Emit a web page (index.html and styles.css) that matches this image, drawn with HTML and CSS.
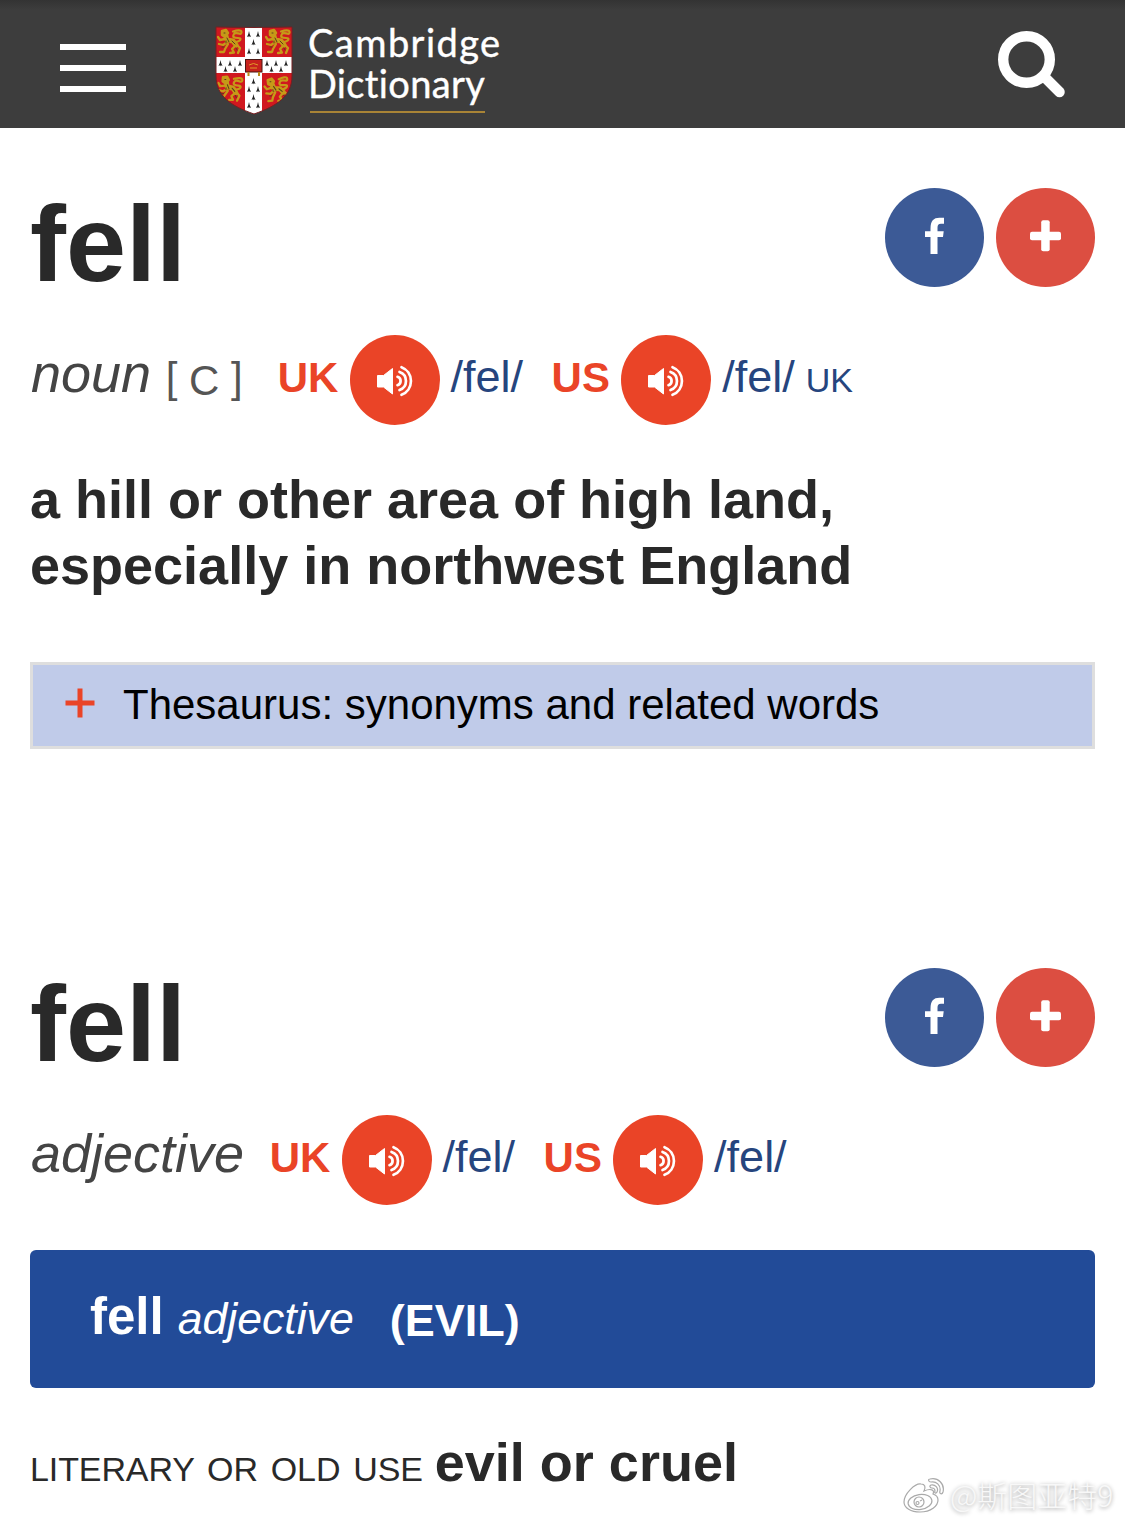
FILE: index.html
```html
<!DOCTYPE html>
<html lang="en">
<head>
<meta charset="utf-8">
<title>fell - Cambridge Dictionary</title>
<link rel="stylesheet" href="styles.css">
</head>
<body>
<svg width="0" height="0" class="defs" aria-hidden="true">
  <symbol id="speaker" viewBox="0 0 90 90">
    <circle cx="45" cy="45" r="45" fill="#ea4427"/>
    <path d="M27.500 40.500H33.500L42.500 33.500V59L33.500 52H27.500Z" fill="#fff" stroke="#fff" stroke-width="1" stroke-linejoin="round"/>
    <path d="M47.500 41.800A4.400 4.400 0 0 1 47.500 50.200M49.500 37A9.500 9.500 0 0 1 49.500 55M51.500 32.200A14.800 14.800 0 0 1 51.500 59.800" fill="none" stroke="#fff" stroke-width="2.700" stroke-linecap="round"/>
  </symbol>
  <symbol id="facebook" viewBox="0 0 99 99">
    <circle cx="49.500" cy="49.500" r="49.500" fill="#3c5a96"/>
    <path d="M45.500 66V49H40V43.300H45.500V40.500C45.500 33 48.500 29.800 54.500 29.800H59V35.800H56C53.300 35.800 52.500 37 52.500 39.800V43.300H58.700L58 49H52.500V66Z" fill="#fff"/>
  </symbol>
  <symbol id="plus" viewBox="0 0 99 99">
    <circle cx="49.500" cy="49.500" r="49.500" fill="#dc4e41"/>
    <rect x="45.200" y="32.300" width="8.500" height="31" rx="2" fill="#fff"/>
    <rect x="34" y="43.700" width="31" height="8.500" rx="2" fill="#fff"/>
  </symbol>
</svg>
<header class="topbar">
  <div class="menu"><span></span><span></span><span></span></div>
  <div class="logo">
    <svg class="crest" width="78" height="89" viewBox="0 0 78 89">
      <defs>
        <clipPath id="shield"><path d="M1 1Q39 2 77 1V50C77 70 62 80 39 88C16 80 1 70 1 50Z"/></clipPath>
        <g id="lion" fill="none" stroke="#c69a18" stroke-linecap="round" stroke-linejoin="round">
          <path d="M6 3L10 2L12 5L9 9L6 7Z" fill="#c69a18" stroke-width="2.500"/>
          <path d="M10 8L11 12L17 13L20 17" stroke-width="5"/>
          <path d="M9 11L4 12L2 9M10 15L7 17L3 16M12 16L9 21L8 24L4 24M19 18L16 21L18 24.500L14 25M21 17L24 20L22 25" stroke-width="2.300"/>
          <path d="M20 14C25 13 26 10 22 10S16 9 18 6S25 8 25.500 4.500S20 2.500 17 3.500" stroke-width="2.200"/>
          <path d="M8 5H9M11 10L13 14M16 13L19 16M10 13V15M6 19L8 19M20 20L21 22" stroke="#59401a" stroke-width="1"/>
        </g>
        <g id="ermine" fill="#222">
          <path d="M0 -3L.7 0L2 3L.4 2.300L0 3.500L-.4 2.300L-2 3L-.7 0Z"/>
        </g>
      </defs>
      <g clip-path="url(#shield)">
        <rect width="78" height="89" fill="#d0181f"/>
        <use href="#lion" x="1" y="2"/><use href="#lion" x="49" y="2"/>
        <use href="#lion" transform="translate(1 49) rotate(5 14 14)"/><use href="#lion" transform="translate(48 50) rotate(-7 14 14)"/>
        <path d="M30 0H47V89H30ZM0 31H78V47H0Z" fill="#fff"/>
        <use href="#ermine" x="34" y="8"/><use href="#ermine" x="43" y="8"/><use href="#ermine" x="38.500" y="16"/>
        <use href="#ermine" x="34" y="25"/><use href="#ermine" x="43" y="25"/>
        <use href="#ermine" x="5.500" y="37"/><use href="#ermine" x="15" y="37"/><use href="#ermine" x="25" y="37"/>
        <use href="#ermine" x="10.500" y="43"/><use href="#ermine" x="20" y="43"/>
        <use href="#ermine" x="52" y="37"/><use href="#ermine" x="61" y="37"/><use href="#ermine" x="71" y="37"/>
        <use href="#ermine" x="56.500" y="43"/><use href="#ermine" x="66" y="43"/>
        <use href="#ermine" x="38.500" y="55"/><use href="#ermine" x="34" y="63"/><use href="#ermine" x="43" y="63"/>
        <use href="#ermine" x="38.500" y="71"/><use href="#ermine" x="34" y="79"/><use href="#ermine" x="43" y="79"/>
        <rect x="30.500" y="33.500" width="16.500" height="12.500" fill="#c7221d" stroke="#4b1511"/>
        <path d="M34 39Q38.500 36 43 39M35 42H42" stroke="#e09a28" fill="none"/>
        <path d="M33.500 46V50M44 46V50" stroke="#b8891d" stroke-width="2"/>
      </g>
      <path d="M1 1Q39 2 77 1V50C77 70 62 80 39 88C16 80 1 70 1 50Z" fill="none" stroke="#742022" stroke-width="1"/>
    </svg>
    <div class="wordmark"><span class="w1">Cambridge</span><span class="w2">Dictionary</span></div>
  </div>
  <svg class="search" width="70" height="70" viewBox="0 0 70 70"><circle cx="29.500" cy="29.500" r="23.300" fill="none" stroke="#fff" stroke-width="10.400"/><path d="M47 46.500L62.500 62" stroke="#fff" stroke-width="10.500" stroke-linecap="round"/></svg>
</header>
<main>
  <section class="entry first">
    <div class="head">
      <h1>fell</h1>
      <div class="share"><svg><use href="#facebook"/></svg><svg><use href="#plus"/></svg></div>
    </div>
    <div class="pron">
      <i class="pos">noun</i>
      <span class="gram">[ <span class="code">C</span> ]</span>
      <b class="region uk">UK</b><svg class="audio"><use href="#speaker"/></svg><span class="ipa">/fel/</span>
      <b class="region us">US</b><svg class="audio"><use href="#speaker"/></svg><span class="ipa">/fel/</span>
      <span class="variety">UK</span>
    </div>
    <p class="def">a hill or other area of high land,<br>especially in northwest England</p>
    <div class="thesaurus">
      <svg width="30" height="30" viewBox="0 0 30 30"><path d="M15 .5V29.500M.5 15H29.500" stroke="#ea4427" stroke-width="5"/></svg>
      <span>Thesaurus: synonyms and related words</span>
    </div>
  </section>
  <section class="entry second">
    <div class="head">
      <h1>fell</h1>
      <div class="share"><svg><use href="#facebook"/></svg><svg><use href="#plus"/></svg></div>
    </div>
    <div class="pron">
      <i class="pos">adjective</i>
      <b class="region uk">UK</b><svg class="audio"><use href="#speaker"/></svg><span class="ipa">/fel/</span>
      <b class="region us">US</b><svg class="audio"><use href="#speaker"/></svg><span class="ipa">/fel/</span>
    </div>
    <h2 class="sense"><span class="word">fell</span><i>adjective</i><span class="guide">(EVIL)</span></h2>
    <p class="meaning"><span class="usage">LITERARY OR OLD USE</span><b>evil or cruel</b></p>
  </section>
</main>
<div class="watermark">
  <svg width="44" height="38" viewBox="0 0 44 38" fill="none" stroke="#aaa" stroke-width="1.200">
    <path d="M19 7C13 6 2 17 2 25C2 31 9 35 18 35C29 35 36 29 36 23C36 20 34 18 31 17C33 13 29 11 22 14C24 10 23 7 19 7Z" fill="#fff"/>
    <ellipse cx="18" cy="25" rx="12" ry="7.500" transform="rotate(-8 18 25)"/>
    <circle cx="17" cy="25" r="5"/><circle cx="15.500" cy="26" r="1.500"/><path d="M18 24L20 23"/>
    <path d="M28 2C36 0 43 7 41 15C40 18 37 17 38 14C39 8 34 4 29 5C26 5 26 2 28 2ZM29 8C33 7 37 11 35 15C34 17 32 16 33 14C33 12 32 11 30 11C28 11 27 9 29 8Z" fill="#fff"/>
  </svg>
  <span>@斯图亚特9</span>
</div>
</body>
</html>
```
FILE: styles.css
```css
* { box-sizing: border-box; }
body {
  margin: 0;
  height: 1524px;
  position: relative;
  overflow: hidden;
  background: #fff;
  color: #292929;
  font-family: "Liberation Sans", Arial, sans-serif;
}
h1, h2, p { margin: 0; }
.defs { display: block; height: 0; }

.topbar {
  display: flex;
  height: 128px;
  padding: 0 58px 0 60px;
  background: linear-gradient(#333, #3d3d3d 10px);
}
.menu {
  display: flex;
  flex-direction: column;
  gap: 15px;
  width: 66px;
  padding-top: 44px;
}
.menu span { height: 6px; background: #fff; }
.logo {
  display: flex;
  gap: 15px;
  margin-left: 90px;
  padding-top: 26px;
}
.crest { margin-left: -1px; }
.wordmark {
  display: flex;
  flex-direction: column;
  font-family: Lato, sans-serif;
  font-size: 38px;
  line-height: 41px;
  color: #fff;
  font-variant-ligatures: none;
  -webkit-text-stroke: .4px #fff;
}
.w1 { margin-top: -4px; letter-spacing: 1.45px; }
.w2 { width: 175px; height: 50px; border-bottom: 2px solid #a98436; margin-left: 2px; text-indent: -2px; white-space: nowrap; letter-spacing: .35px; }
.search { margin: 30px 0 0 auto; }

.entry { padding: 0 30px; }
.first { padding-top: 60px; height: 840px; }
.head { display: flex; justify-content: space-between; height: 147px; }
.head h1 { font-size: 108px; line-height: 120px; margin-top: -4px; }
.share { display: flex; gap: 12px; }
.share svg { width: 99px; height: 99px; }

.pron { display: flex; align-items: baseline; line-height: 1; height: 90px; }
.pos { font-size: 54px; color: #444; margin: 11px 0 0 1px; }
.gram { font-size: 42px; color: #555; margin-left: 14.5px; }
.code { vertical-align: -3px; }
.region { font-size: 42px; color: #ea4427; }
.uk { margin-left: 25.5px; }
.first .uk { margin-left: 35px; }
.us { margin-left: 28.5px; }
.audio { align-self: flex-start; width: 90px; height: 90px; margin: 0 11px 0 11.2px; }
.ipa { font-size: 45px; color: #26457e; }
.variety { font-size: 34px; color: #26457e; margin-left: 11px; }

.def { margin-top: 41px; font-size: 54px; font-weight: bold; line-height: 66px; white-space: nowrap; }
.thesaurus {
  display: flex;
  align-items: center;
  gap: 28px;
  height: 87px;
  margin-top: 64px;
  padding: 0 32px 4px;
  border: 3px solid #dedede;
  background: #c0cbe9;
  color: #000;
  font-size: 42px;
}
.thesaurus svg { margin-bottom: 1px; }
.thesaurus span { margin-top: 3px; }

.sense {
  display: flex;
  align-items: baseline;
  height: 138px;
  margin-top: 45px;
  padding: 38px 60px 0;
  border-radius: 6px;
  background: #224b98;
  color: #fff;
  font-size: 51px;
  line-height: 58px;
}
.sense i { margin-left: 14px; font-size: 44.6px; font-weight: normal; }
.guide { position: relative; top: 2px; margin-left: 36px; font-size: 45px; }
.meaning { display: flex; align-items: baseline; margin-top: 41px; font-size: 54px; line-height: 66px; white-space: nowrap; }
.usage { font-size: 34px; word-spacing: 3.5px; letter-spacing: -.1px; margin-right: 12px; }

.watermark {
  position: absolute;
  left: 902px;
  top: 1477px;
  display: flex;
  gap: 4px;
  font: 300 30px/34px "Noto Sans CJK SC", sans-serif;
  color: #f8f8f8;
  text-shadow: 0 1px 4px rgba(0, 0, 0, .4);
}
```
